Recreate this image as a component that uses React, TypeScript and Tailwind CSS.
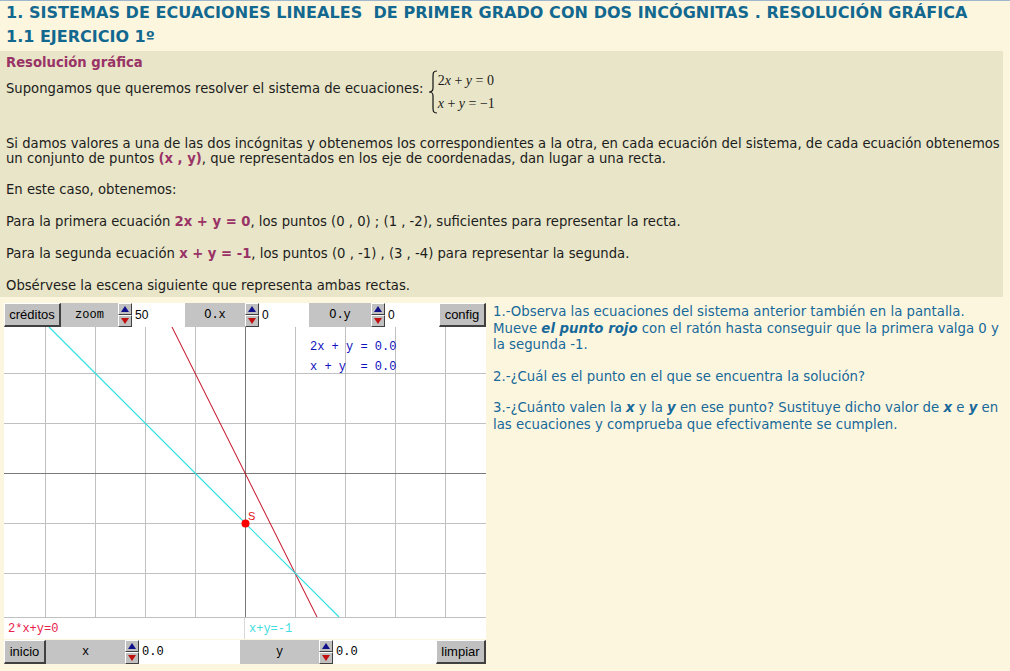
import React from "react";

const Spinner = () => (
  <div className="flex flex-col w-[14px] h-full bg-[#c0c0c0] shrink-0">
    <div className="flex-1 flex items-center justify-center border-t border-l border-t-white border-l-white border-b border-r border-b-[#404040] border-r-[#404040]">
      <svg width="8" height="6" viewBox="0 0 8 6"><polygon points="4,0 8,6 0,6" fill="#10108a" /></svg>
    </div>
    <div className="flex-1 flex items-center justify-center border-t border-l border-t-white border-l-white border-b border-r border-b-[#404040] border-r-[#404040]">
      <svg width="8" height="6" viewBox="0 0 8 6"><polygon points="0,0 8,0 4,6" fill="#c01010" /></svg>
    </div>
  </div>
);

const Btn = ({ label, w }: { label: string; w: string }) => (
  <div
    className={`${w} h-full shrink-0 flex items-center justify-center bg-[#c0c0c0] border-t border-l border-t-white border-l-white border-b-2 border-r-2 border-b-[#404040] border-r-[#404040] text-[13px] text-black`}
    style={{ fontFamily: '"Liberation Sans", Arial, sans-serif' }}
  >
    {label}
  </div>
);

const Label = ({ label, w }: { label: string; w: string }) => (
  <div
    className={`${w} h-full shrink-0 flex items-center justify-center bg-[#c4c4c4] text-[12px] text-black`}
    style={{ fontFamily: '"Liberation Mono", "Courier New", monospace' }}
  >
    {label}
  </div>
);

const Input = ({ value, w, mono }: { value: string; w: string; mono?: boolean }) => (
  <div
    className={`${w} h-full shrink-0 flex items-center bg-white pl-[3px] text-[12px] text-black`}
    style={{ fontFamily: mono ? '"Liberation Mono", monospace' : '"Liberation Sans", Arial, sans-serif' }}
  >
    {value}
  </div>
);

const Graph = () => {
  const vx = [41, 91, 141, 191, 291, 341, 391, 441];
  const hy = [46, 96, 196, 246];
  return (
    <svg width="482" height="290" viewBox="0 0 482 290" className="block bg-white">
      {vx.map((x) => (
        <line key={"v" + x} x1={x + 0.5} y1={0} x2={x + 0.5} y2={290} stroke="#c0c0c0" strokeWidth="1" />
      ))}
      {hy.map((y) => (
        <line key={"h" + y} x1={0} y1={y + 0.5} x2={482} y2={y + 0.5} stroke="#c0c0c0" strokeWidth="1" />
      ))}
      <line x1={241.5} y1={0} x2={241.5} y2={290} stroke="#7a7a7a" strokeWidth="1" />
      <line x1={0} y1={146.5} x2={482} y2={146.5} stroke="#7a7a7a" strokeWidth="1" />
      <line x1={168} y1={0} x2={313} y2={290} stroke="#c00018" strokeWidth="1" />
      <line x1={45} y1={0} x2={335} y2={290} stroke="#33e0e0" strokeWidth="1.2" />
      <circle cx={241.5} cy={196.5} r={4} fill="#ff0000" />
      <text x={244} y={193} fontSize="11" fill="#e01010" fontFamily='"Liberation Sans", Arial, sans-serif'>S</text>
      <text x={306} y={23} fontSize="12" fill="#1010c0" fontFamily='"Liberation Mono", "Courier New", monospace' xmlSpace="preserve">2x + y = 0.0</text>
      <text x={306} y={43} fontSize="12" fill="#1010c0" fontFamily='"Liberation Mono", "Courier New", monospace' xmlSpace="preserve">x + y  = 0.0</text>
    </svg>
  );
};

export default function App() {
  const font = { fontFamily: '"DejaVu Sans", Verdana, sans-serif' };
  const mar = "text-[#993366] font-bold";
  return (
    <div className="w-[1010px] h-[671px] bg-[#fdf6df] text-[#1c1c1c] overflow-hidden border-t border-t-[#9fb6cc]" style={font}>
      <div className="pl-[6px] pt-[1px]">
        <div className="text-[16px] font-bold text-[#12688f] leading-[22px] whitespace-nowrap tracking-[0.05px]">
          1. SISTEMAS DE ECUACIONES LINEALES&nbsp; DE PRIMER GRADO CON DOS INCÓGNITAS . RESOLUCIÓN GRÁFICA
        </div>
        <div className="text-[16px] font-bold text-[#12688f] leading-[27px] -mt-[1px] mb-[1px]">1.1 EJERCICIO 1º</div>
      </div>

      <div className="w-[1003px] h-[246px] bg-[#e8e5c8] pl-[6px] pt-[3px] text-[13.2px] leading-[15px] whitespace-nowrap">
        <div className={mar + " text-[13.2px] leading-[17px]"}>Resolución gráfica</div>
        <div className="flex items-start h-[48px]">
          <span className="mt-[10px] leading-[16px]">Supongamos que queremos resolver el sistema de ecuaciones:&nbsp;</span>
          <div className="flex items-center -mt-[2px]">
            <svg width="10" height="46" viewBox="0 0 10 46">
              <path d="M9 2 C5 2 5 4 5 8 L5 19 C5 22 4 23 1 23 C4 23 5 24 5 27 L5 38 C5 42 5 44 9 44" fill="none" stroke="#111" strokeWidth="1.2" />
            </svg>
            <div className="flex flex-col text-[14px] leading-[23px]" style={{ fontFamily: '"Liberation Serif", "Times New Roman", serif' }}>
              <span>2<i>x</i> + <i>y</i> = 0</span>
              <span><i>x</i> + <i>y</i> = −1</span>
            </div>
          </div>
        </div>
        <div className="mt-[17px]">
          Si damos valores a una de las dos incógnitas y obtenemos los correspondientes a la otra, en cada ecuación del sistema, de cada ecuación obtenemos
          <br />
          un conjunto de puntos <span className={mar}>(x , y)</span>, que representados en los eje de coordenadas, dan lugar a una recta.
        </div>
        <div className="mt-[16px]">En este caso, obtenemos:</div>
        <div className="mt-[17px]">
          Para la primera ecuación <span className={mar}>2x + y = 0</span>, los puntos (0 , 0) ; (1 , -2), suficientes para representar la recta.
        </div>
        <div className="mt-[17px]">
          Para la segunda ecuación <span className={mar}>x + y = -1</span>, los puntos (0 , -1) , (3 , -4) para representar la segunda.
        </div>
        <div className="mt-[17px]">Obsérvese la escena siguiente que representa ambas rectas.</div>
      </div>

      <div className="flex mt-[6px]">
        <div className="ml-[4px] w-[482px] flex flex-col shrink-0">
          <div className="flex h-[24px]">
            <Btn label="créditos" w="w-[57px]" />
            <Label label="zoom" w="w-[57px]" />
            <Spinner />
            <Input value="50" w="w-[53px]" />
            <Label label="O.x" w="w-[60px]" />
            <Spinner />
            <Input value="0" w="w-[50px]" />
            <Label label="O.y" w="w-[62px]" />
            <Spinner />
            <Input value="0" w="w-[54px]" />
            <div className="flex-1 h-full bg-white flex justify-end">
              <Btn label="config" w="w-[47px]" />
            </div>
          </div>
          <Graph />
          <div className="flex h-[22px] bg-white border-t border-t-[#c0c0c0] text-[12px]" style={{ fontFamily: '"Liberation Mono", "Courier New", monospace' }}>
            <div className="w-[241px] flex items-center pl-[4px] text-[#e8204a] border-r border-r-[#d8d8d8]">2*x+y=0</div>
            <div className="flex-1 flex items-center pl-[4px] text-[#40dede]">x+y=-1</div>
          </div>
          <div className="flex h-[24px] mt-[1px]">
            <Btn label="inicio" w="w-[42px]" />
            <Label label="x" w="w-[79px]" />
            <Spinner />
            <Input value="0.0" w="w-[101px]" mono />
            <Label label="y" w="w-[79px]" />
            <Spinner />
            <Input value="0.0" w="w-[103px]" mono />
            <div className="flex-1 h-full bg-[#fdf6df] flex justify-end">
              <Btn label="limpiar" w="w-[50px]" />
            </div>
          </div>
        </div>
        <div className="ml-[7px] pt-[1px] text-[13.3px] leading-[16.5px] text-[#17699a] whitespace-nowrap">
          <div>
            1.-Observa las ecuaciones del sistema anterior también en la pantalla.
            <br />
            Mueve <b><i>el punto rojo</i></b> con el ratón hasta conseguir que la primera valga 0 y
            <br />
            la segunda -1.
          </div>
          <div className="mt-[15px]">2.-¿Cuál es el punto en el que se encuentra la solución?</div>
          <div className="mt-[15px]">
            3.-¿Cuánto valen la <b><i>x</i></b> y la <b><i>y</i></b> en ese punto? Sustituye dicho valor de <b><i>x</i></b> e <b><i>y</i></b> en
            <br />
            las ecuaciones y comprueba que efectivamente se cumplen.
          </div>
        </div>
      </div>
    </div>
  );
}
